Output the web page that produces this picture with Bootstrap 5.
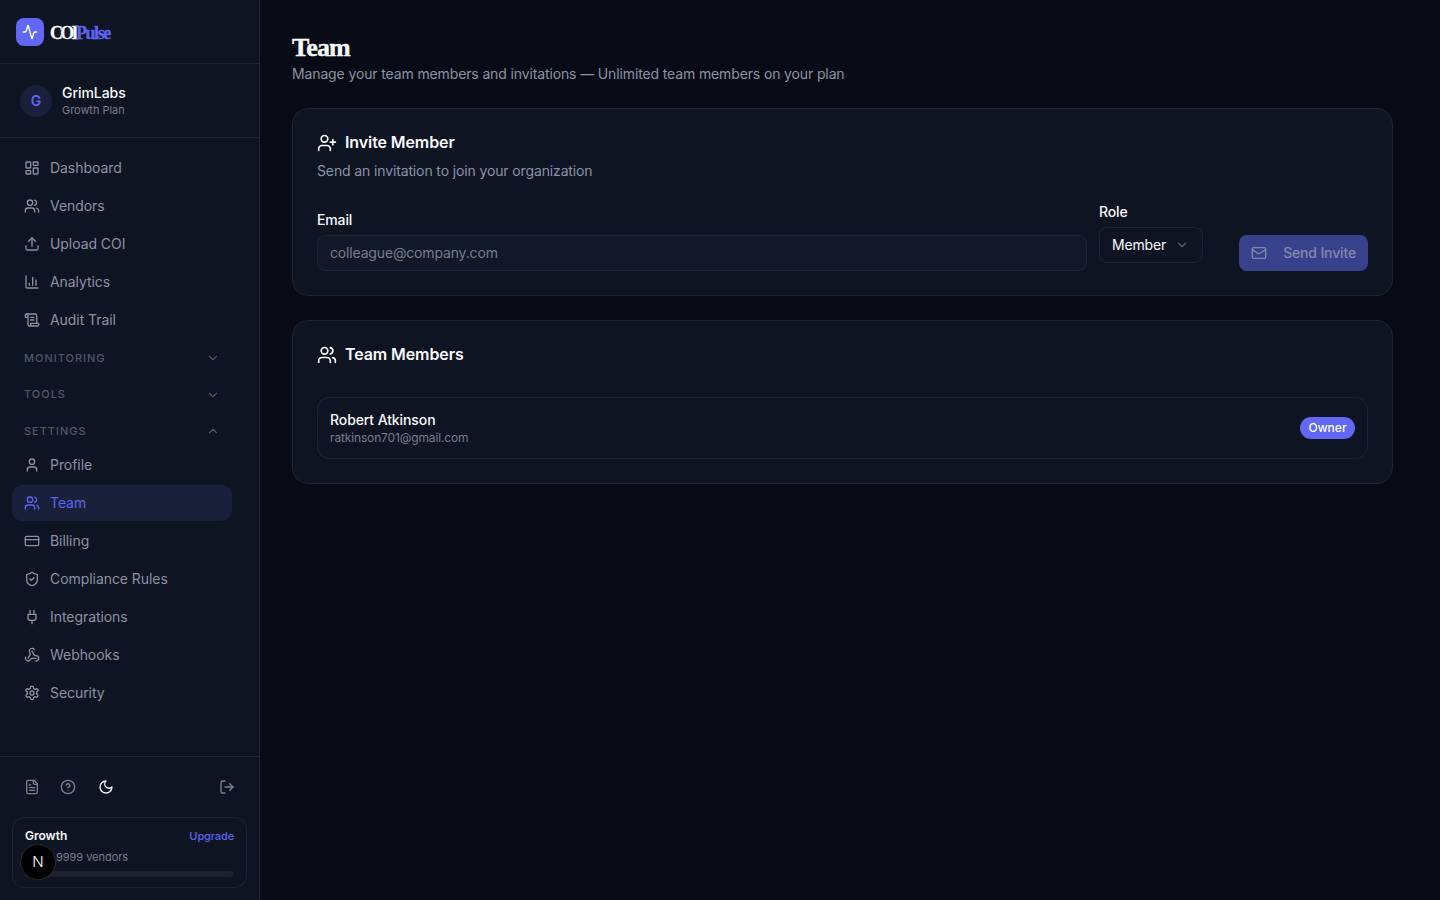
<!DOCTYPE html>
<html lang="en">
<head>
<meta charset="utf-8">
<title>Team</title>
<link href="https://cdn.jsdelivr.net/npm/bootstrap@5.3.0/dist/css/bootstrap.min.css" rel="stylesheet">
<style>
html,body{height:100%}
body{background:#080b15;color:#f8fafc;font-family:Inter,"Liberation Sans",sans-serif;font-size:14px;overflow:hidden}
.shell{height:900px}
.side{width:260px;flex:none;background:#0f1423;border-right:1px solid #1e2433;height:900px}
.ic{width:16px;height:16px;fill:none;stroke:currentColor;stroke-width:2;stroke-linecap:round;stroke-linejoin:round;flex:none}
.ic-t{width:20px;height:20px}
.brandbar{height:64px;padding:0 16px;border-bottom:1px solid #1e2433}
.logo{width:28px;height:28px;border-radius:8px;background:#6068f5;color:#fff}
.wordmark,.pagetitle{font-family:"Liberation Serif",serif;font-weight:700}
.wordmark{font-size:18px;letter-spacing:-2.7px;margin-left:6px;padding-top:2px;line-height:1;-webkit-text-stroke:.3px currentColor}
.accent{color:#5d65f2;letter-spacing:-1.4px}
.org{height:74px;padding:0 20px;border-bottom:1px solid #1e2433;gap:10px}
.orgav{width:32px;height:32px;background:#1a1f3a;color:#5d65f2;font-weight:600;font-size:14px}
.orgname{font-size:14px;font-weight:500;line-height:18px;letter-spacing:-.05px;margin-top:1px}
.orgplan{font-size:11px;color:#737d8e;line-height:15px;margin-top:1px;letter-spacing:-.05px}
.sidenav{padding:11px 27px 0 12px}
.navlink{height:38px;padding:0 12px 2px;gap:10px;color:#8a93a3;font-size:14px;border-radius:10px;text-decoration:none;letter-spacing:-.06px}
.navlink .ic{transform:translateY(1px)}
.navlink.on{background:#1a1f3a;color:#5d65f2;height:36px;margin:1px 0}
.sect{height:30px;padding:0 12px;color:#4f5869;font-size:11px;font-weight:500;letter-spacing:.98px;margin-top:4px}
.sect + .sect{margin-top:6.5px}
.sect .ic{width:14px;height:14px}
.foot{margin-top:auto;border-top:1px solid #1e2433;padding:0 12px 12px}
.tools{height:60px;padding:0 12px;color:#788292}
.tools .help{margin-left:20px}
.tools .moon{color:#f1f5f9;margin-left:22px}
.plan{height:71px;border:1px solid #1e2433;border-radius:12px;padding:10px 12px}
.plantop{font-size:12px;font-weight:600;line-height:16px}
.upg{color:#5d65f2;font-size:11px;font-weight:500;text-decoration:none;letter-spacing:-.12px}
.planinfo{font-size:11px;color:#737d8e;line-height:14px;margin-top:6px;padding-left:31px;letter-spacing:-.04px}
.track{height:6px;background:#1c2230;border-radius:3px;margin-top:7px}
.devbadge{position:absolute;left:20px;top:844px;width:36px;height:36px;border-radius:50%;background:#000;border:1px solid #2b2b2b;color:#fff;font-size:15px;font-weight:300;padding-top:1px;z-index:5}
.content{padding:32px 47px 0 32px;min-width:0}
.pagetitle{font-size:26px;line-height:32px;letter-spacing:-.8px;margin:0;-webkit-text-stroke:.4px currentColor}
.sub{color:#8a93a3;font-size:14px;line-height:20px;margin:0 0 24px;letter-spacing:-.13px}
.panel{background:#0f1423;border:1px solid #1e2433;border-radius:16px;padding:24px;margin-bottom:24px}
.pantitle{font-size:16px;font-weight:600;line-height:20px;height:20px;padding-bottom:2px;gap:8px;margin:0;letter-spacing:-.1px}
.pantitle .ic{transform:translateY(1px)}
.pansub{color:#8a93a3;font-size:14px;line-height:20px;margin:8px 0 0;letter-spacing:-.13px}
.fieldlabel{font-size:14px;font-weight:500;line-height:16px;margin-bottom:7px;display:block;letter-spacing:-.15px}
.emailin{height:36px;background:#121827;border:1px solid #1e2433;border-radius:8px;color:#f8fafc;font-size:14px;padding:0 12px 2px;box-shadow:none;letter-spacing:-.16px}
.emailin::placeholder{color:#737d8e;opacity:1}
.emailin:focus{background:#121827;border-color:#1e2433;color:#f8fafc;box-shadow:none}
.formrow{margin-top:23px;gap:12px}
.rolecol{width:128px;flex:none;padding-bottom:8px}
.rolesel{width:104px;height:36px;background:transparent;border:1px solid #1e2433;border-radius:8px;color:#f8fafc;font-size:14px;padding:0 12px 2px;letter-spacing:-.15px}
.rolesel .ic{color:#5d6676;width:14px;height:14px;transform:translate(-1px,1px)}
.sendbtn{width:129px;height:36px;flex:none;background:#38428c;border:0;border-radius:8px;color:#848aa5;font-size:14px;font-weight:500;padding:0 12px 2px;letter-spacing:-.15px}
.sendbtn .ic{transform:translateY(1px)}
.sendbtn:disabled{background:#38428c;color:#848aa5;opacity:1}
.member{margin-top:32px;height:62px;border:1px solid #1e2433;border-radius:12px;padding:0 12px}
.mname{font-size:14px;font-weight:500;line-height:18px;letter-spacing:-.1px}
.mmail{font-size:12px;color:#737d8e;line-height:16px;margin-top:1px;letter-spacing:-.14px}
.ownerpill{background:#6068f5;color:#fff;font-size:12px;font-weight:500;height:22px;width:55px;border-radius:11px}
</style>
</head>
<body>
<svg width="0" height="0" class="position-absolute">
<defs>
<symbol id="i-activity" viewBox="0 0 24 24"><path d="M22 12h-2.48a2 2 0 0 0-1.93 1.46l-2.35 8.36a.25.25 0 0 1-.48 0L9.24 2.18a.25.25 0 0 0-.48 0l-2.35 8.36A2 2 0 0 1 4.49 12H2"/></symbol>
<symbol id="i-dash" viewBox="0 0 24 24"><rect width="7" height="9" x="3" y="3" rx="1"/><rect width="7" height="5" x="14" y="3" rx="1"/><rect width="7" height="9" x="14" y="12" rx="1"/><rect width="7" height="5" x="3" y="16" rx="1"/></symbol>
<symbol id="i-users" viewBox="0 0 24 24"><path d="M16 21v-2a4 4 0 0 0-4-4H6a4 4 0 0 0-4 4v2"/><circle cx="9" cy="7" r="4"/><path d="M22 21v-2a4 4 0 0 0-3-3.87"/><path d="M16 3.13a4 4 0 0 1 0 7.75"/></symbol>
<symbol id="i-upload" viewBox="0 0 24 24"><path d="M21 15v4a2 2 0 0 1-2 2H5a2 2 0 0 1-2-2v-4"/><polyline points="17 8 12 3 7 8"/><line x1="12" x2="12" y1="3" y2="15"/></symbol>
<symbol id="i-chart" viewBox="0 0 24 24"><path d="M3 3v16a2 2 0 0 0 2 2h16"/><path d="M18 17V9"/><path d="M13 17V5"/><path d="M8 17v-3"/></symbol>
<symbol id="i-scroll" viewBox="0 0 24 24"><path d="M15 12h-5"/><path d="M15 8h-5"/><path d="M19 17V5a2 2 0 0 0-2-2H4"/><path d="M8 21h12a2 2 0 0 0 2-2v-1a1 1 0 0 0-1-1H11a1 1 0 0 0-1 1v1a2 2 0 1 1-4 0V5a2 2 0 1 0-4 0v2a1 1 0 0 0 1 1h3"/></symbol>
<symbol id="i-down" viewBox="0 0 24 24"><path d="m6 9 6 6 6-6"/></symbol>
<symbol id="i-up" viewBox="0 0 24 24"><path d="m18 15-6-6-6 6"/></symbol>
<symbol id="i-user" viewBox="0 0 24 24"><path d="M19 21v-2a4 4 0 0 0-4-4H9a4 4 0 0 0-4 4v2"/><circle cx="12" cy="7" r="4"/></symbol>
<symbol id="i-card" viewBox="0 0 24 24"><rect width="20" height="14" x="2" y="5" rx="2"/><line x1="2" x2="22" y1="10" y2="10"/></symbol>
<symbol id="i-shield" viewBox="0 0 24 24"><path d="M20 13c0 5-3.5 7.5-7.66 8.95a1 1 0 0 1-.67-.01C7.5 20.5 4 18 4 13V6a1 1 0 0 1 1-1c2 0 4.5-1.2 6.24-2.72a1.17 1.17 0 0 1 1.52 0C14.51 3.81 17 5 19 5a1 1 0 0 1 1 1z"/><path d="m9 12 2 2 4-4"/></symbol>
<symbol id="i-plug" viewBox="0 0 24 24"><path d="M12 22v-5"/><path d="M9 8V2"/><path d="M15 8V2"/><path d="M18 8v5a4 4 0 0 1-4 4h-4a4 4 0 0 1-4-4V8Z"/></symbol>
<symbol id="i-webhook" viewBox="0 0 24 24"><path d="M18 16.98h-5.99c-1.1 0-1.95.94-2.48 1.9A4 4 0 0 1 2 17c.01-.7.2-1.4.57-2"/><path d="m6 17 3.13-5.78c.53-.97.1-2.18-.5-3.1a4 4 0 1 1 6.89-4.06"/><path d="m12 6 3.13 5.73C15.66 12.7 16.9 13 18 13a4 4 0 0 1 0 8"/></symbol>
<symbol id="i-gear" viewBox="0 0 24 24"><path d="M12.22 2h-.44a2 2 0 0 0-2 2v.18a2 2 0 0 1-1 1.73l-.43.25a2 2 0 0 1-2 0l-.15-.08a2 2 0 0 0-2.73.73l-.22.38a2 2 0 0 0 .73 2.73l.15.1a2 2 0 0 1 1 1.72v.51a2 2 0 0 1-1 1.74l-.15.09a2 2 0 0 0-.73 2.73l.22.38a2 2 0 0 0 2.73.73l.15-.08a2 2 0 0 1 2 0l.43.25a2 2 0 0 1 1 1.73V20a2 2 0 0 0 2 2h.44a2 2 0 0 0 2-2v-.18a2 2 0 0 1 1-1.73l.43-.25a2 2 0 0 1 2 0l.15.08a2 2 0 0 0 2.73-.73l.22-.39a2 2 0 0 0-.73-2.73l-.15-.08a2 2 0 0 1-1-1.74v-.5a2 2 0 0 1 1-1.74l.15-.09a2 2 0 0 0 .73-2.73l-.22-.38a2 2 0 0 0-2.73-.73l-.15.08a2 2 0 0 1-2 0l-.43-.25a2 2 0 0 1-1-1.73V4a2 2 0 0 0-2-2z"/><circle cx="12" cy="12" r="3"/></symbol>
<symbol id="i-file" viewBox="0 0 24 24"><path d="M15 2H6a2 2 0 0 0-2 2v16a2 2 0 0 0 2 2h12a2 2 0 0 0 2-2V7Z"/><path d="M14 2v4a2 2 0 0 0 2 2h4"/><path d="M10 9H8"/><path d="M16 13H8"/><path d="M16 17H8"/></symbol>
<symbol id="i-help" viewBox="0 0 24 24"><circle cx="12" cy="12" r="10"/><path d="M9.09 9a3 3 0 0 1 5.83 1c0 2-3 3-3 3"/><path d="M12 17h.01"/></symbol>
<symbol id="i-moon" viewBox="0 0 24 24"><path d="M12 3a6 6 0 0 0 9 9 9 9 0 1 1-9-9Z"/></symbol>
<symbol id="i-logout" viewBox="0 0 24 24"><path d="M9 21H5a2 2 0 0 1-2-2V5a2 2 0 0 1 2-2h4"/><polyline points="16 17 21 12 16 7"/><line x1="21" x2="9" y1="12" y2="12"/></symbol>
<symbol id="i-userplus" viewBox="0 0 24 24"><path d="M16 21v-2a4 4 0 0 0-4-4H6a4 4 0 0 0-4 4v2"/><circle cx="9" cy="7" r="4"/><line x1="19" x2="19" y1="8" y2="14"/><line x1="22" x2="16" y1="11" y2="11"/></symbol>
<symbol id="i-mail" viewBox="0 0 24 24"><rect width="20" height="16" x="2" y="4" rx="2"/><path d="m22 7-8.97 5.7a1.94 1.94 0 0 1-2.06 0L2 7"/></symbol>
</defs>
</svg>

<div class="shell d-flex">
  <aside class="side d-flex flex-column">
    <div class="brandbar d-flex align-items-center">
      <span class="logo d-flex align-items-center justify-content-center"><svg class="ic"><use href="#i-activity"/></svg></span>
      <span class="wordmark">COI<span class="accent">Pulse</span></span>
    </div>
    <div class="org d-flex align-items-center">
      <span class="orgav rounded-circle d-flex align-items-center justify-content-center">G</span>
      <div><div class="orgname">GrimLabs</div><div class="orgplan">Growth Plan</div></div>
    </div>
    <nav class="sidenav">
      <a class="navlink d-flex align-items-center" href="#"><svg class="ic"><use href="#i-dash"/></svg>Dashboard</a>
      <a class="navlink d-flex align-items-center" href="#"><svg class="ic"><use href="#i-users"/></svg>Vendors</a>
      <a class="navlink d-flex align-items-center" href="#"><svg class="ic"><use href="#i-upload"/></svg>Upload COI</a>
      <a class="navlink d-flex align-items-center" href="#"><svg class="ic"><use href="#i-chart"/></svg>Analytics</a>
      <a class="navlink d-flex align-items-center" href="#"><svg class="ic"><use href="#i-scroll"/></svg>Audit Trail</a>
      <div class="sect d-flex align-items-center justify-content-between">MONITORING<svg class="ic"><use href="#i-down"/></svg></div>
      <div class="sect d-flex align-items-center justify-content-between">TOOLS<svg class="ic"><use href="#i-down"/></svg></div>
      <div class="sect d-flex align-items-center justify-content-between">SETTINGS<svg class="ic"><use href="#i-up"/></svg></div>
      <a class="navlink d-flex align-items-center" href="#"><svg class="ic"><use href="#i-user"/></svg>Profile</a>
      <a class="navlink on d-flex align-items-center" href="#"><svg class="ic"><use href="#i-users"/></svg>Team</a>
      <a class="navlink d-flex align-items-center" href="#"><svg class="ic"><use href="#i-card"/></svg>Billing</a>
      <a class="navlink d-flex align-items-center" href="#"><svg class="ic"><use href="#i-shield"/></svg>Compliance Rules</a>
      <a class="navlink d-flex align-items-center" href="#"><svg class="ic"><use href="#i-plug"/></svg>Integrations</a>
      <a class="navlink d-flex align-items-center" href="#"><svg class="ic"><use href="#i-webhook"/></svg>Webhooks</a>
      <a class="navlink d-flex align-items-center" href="#"><svg class="ic"><use href="#i-gear"/></svg>Security</a>
    </nav>
    <div class="foot">
      <div class="tools d-flex align-items-center">
        <svg class="ic"><use href="#i-file"/></svg>
        <svg class="ic help"><use href="#i-help"/></svg>
        <svg class="ic moon"><use href="#i-moon"/></svg>
        <svg class="ic ms-auto"><use href="#i-logout"/></svg>
      </div>
      <div class="plan">
        <div class="d-flex justify-content-between align-items-center plantop"><span>Growth</span><a class="upg" href="#">Upgrade</a></div>
        <div class="planinfo">9999 vendors</div>
        <div class="track"></div>
      </div>
    </div>
  </aside>
  <main class="content flex-grow-1">
    <h1 class="pagetitle">Team</h1>
    <p class="sub">Manage your team members and invitations — Unlimited team members on your plan</p>
    <section class="panel">
      <h2 class="pantitle d-flex align-items-center"><svg class="ic ic-t"><use href="#i-userplus"/></svg>Invite Member</h2>
      <p class="pansub">Send an invitation to join your organization</p>
      <div class="formrow d-flex align-items-end">
        <div class="flex-grow-1">
          <label class="fieldlabel" for="em">Email</label>
          <input id="em" class="form-control emailin" type="email" placeholder="colleague@company.com">
        </div>
        <div class="rolecol">
          <span class="fieldlabel">Role</span>
          <button type="button" class="btn rolesel d-flex align-items-center justify-content-between">Member<svg class="ic"><use href="#i-down"/></svg></button>
        </div>
        <button type="button" class="btn sendbtn d-flex align-items-center justify-content-between" disabled><svg class="ic"><use href="#i-mail"/></svg>Send Invite</button>
      </div>
    </section>
    <section class="panel">
      <h2 class="pantitle d-flex align-items-center"><svg class="ic ic-t"><use href="#i-users"/></svg>Team Members</h2>
      <div class="member d-flex align-items-center justify-content-between">
        <div><div class="mname">Robert Atkinson</div><div class="mmail">ratkinson701@gmail.com</div></div>
        <span class="ownerpill d-flex align-items-center justify-content-center">Owner</span>
      </div>
    </section>
  </main>
</div>
<div class="devbadge d-flex align-items-center justify-content-center">N</div>
<script src="https://cdn.jsdelivr.net/npm/bootstrap@5.3.0/dist/js/bootstrap.bundle.min.js"></script>
</body>
</html>
